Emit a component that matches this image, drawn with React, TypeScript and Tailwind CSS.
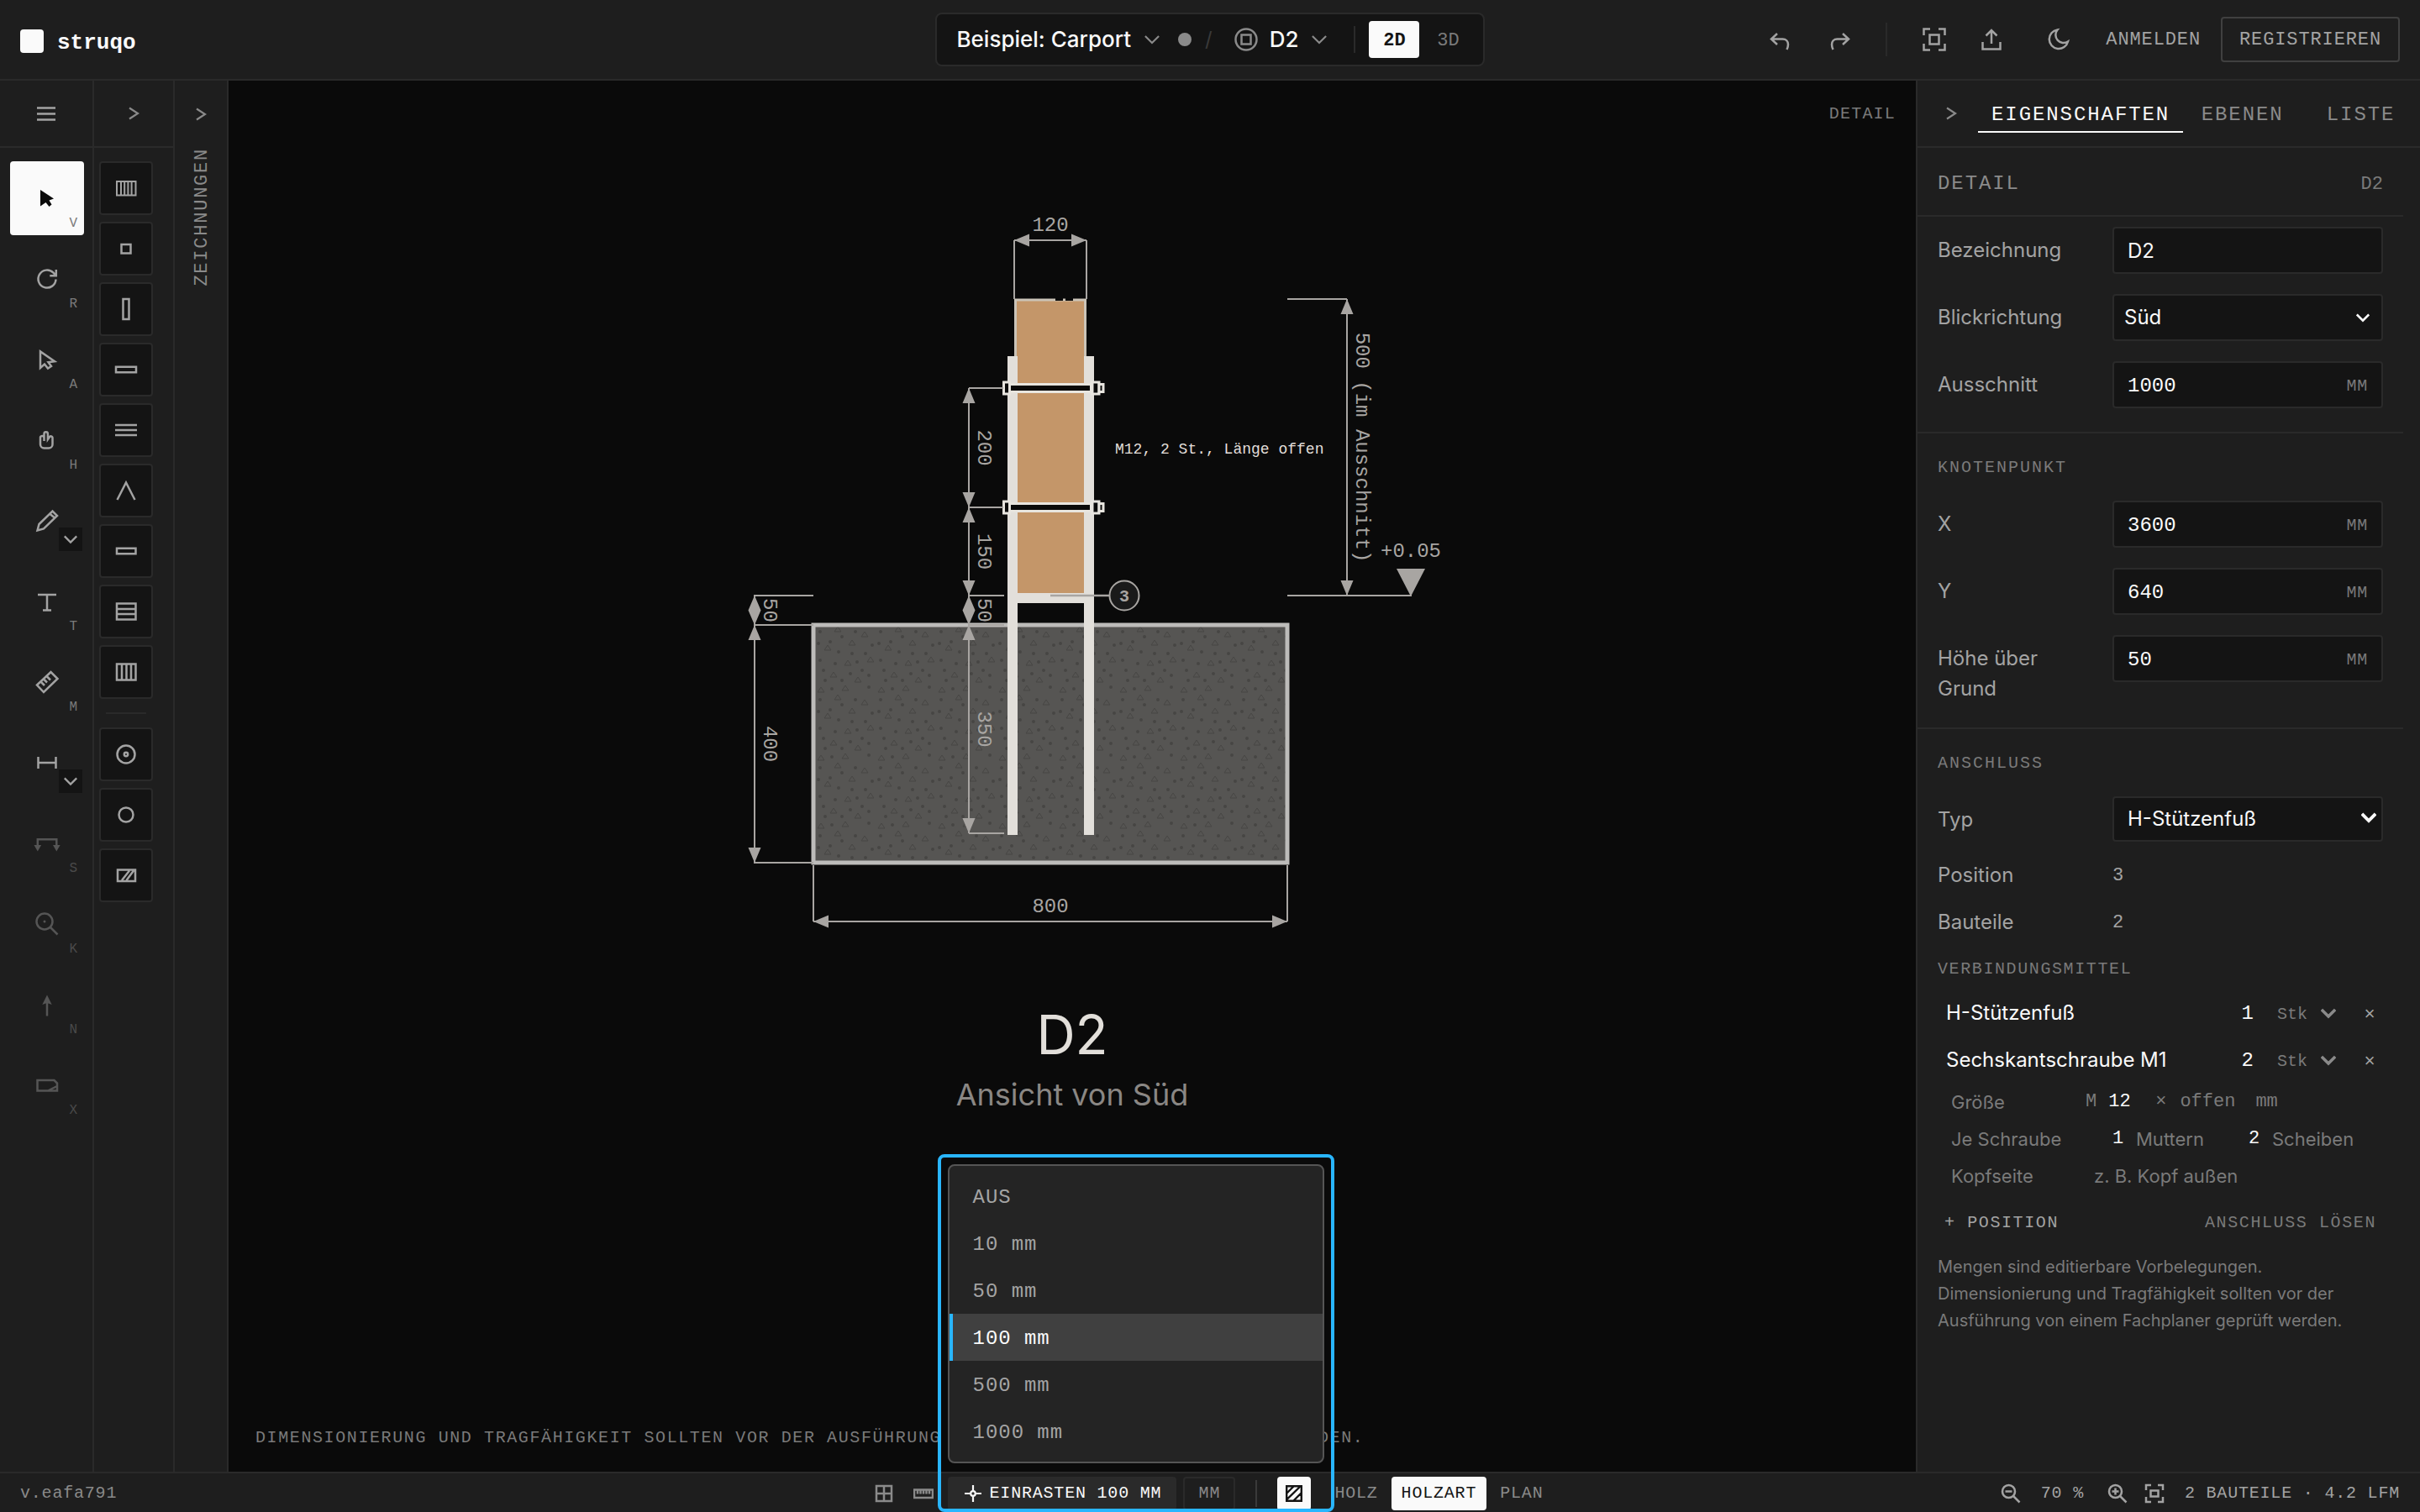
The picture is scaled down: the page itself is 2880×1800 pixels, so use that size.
import React, { useState } from "react";

const mono = "font-['Liberation_Mono',monospace]";
const label20 = "font-['Liberation_Mono',monospace] text-[20px]";

type IconProps = { children: React.ReactNode; className?: string; box?: number; stroke?: number };

function Icon({ children, className = "size-8", box = 32, stroke = 2.5 }: IconProps) {
  return (
    <svg
      viewBox={`0 0 ${box} ${box}`}
      className={className}
      fill="none"
      stroke="currentColor"
      strokeWidth={stroke}
      aria-hidden="true"
    >
      {children}
    </svg>
  );
}

const ChevronRight = () => (
  <Icon stroke={2.2}>
    <path d="M11 9.500 21 16 11 22.500" />
  </Icon>
);

function ChevronDown({ className = "size-5", stroke = 2.4 }: { className?: string; stroke?: number }) {
  return (
    <Icon box={20} className={className} stroke={stroke}>
      <path d="M1 5.500 10 14.500 19 5.500" />
    </Icon>
  );
}

/* ---------- Top bar ---------- */

function TopBar() {
  return (
    <header className="grid h-24 shrink-0 grid-cols-[1fr_auto_1fr] items-center border-b-2 border-[#2a2a2a] px-6">
      <a href="#" className="flex items-center gap-4 text-[#fafafa]">
        <span className="mt-1 size-7 rounded bg-[#fafafa]" />
        <span className={`${mono} mt-2 text-[26px] font-bold leading-8`}>struqo</span>
      </a>

      <div className="flex h-16 items-center rounded-lg border-2 border-[#2a2a2a] bg-[#141414] pl-6 pr-3 text-[#fafafa]">
        <button className="flex items-center gap-4 text-[26px] font-medium leading-8">
          Beispiel: Carport
          <ChevronDown className="size-[18px] text-[#8a8a8a]" />
        </button>
        <span className="ml-[22px] size-4 rounded-full bg-[#8a8a8a]" />
        <span className="ml-4 text-[24px] text-[#3a3a3a]">/</span>
        <button className="ml-[26px] flex items-center text-[26px] font-medium leading-8">
          <Icon className="size-7 text-[#8a8a8a]" box={28}>
            <circle cx="14" cy="14" r="12.500" />
            <rect x="8.500" y="8.500" width="11" height="11" />
          </Icon>
          <span className="ml-3.5 mr-4">D2</span>
          <ChevronDown className="size-[18px] text-[#8a8a8a]" />
        </button>
        <span className="ml-8 h-8 w-0.5 bg-[#2a2a2a]" />
        <div className={`${mono} ml-4 flex gap-1 text-[22px] leading-8`}>
          <button className="h-11 w-[60px] rounded bg-[#fafafa] pt-1 font-bold text-[#141414]">2D</button>
          <button className="h-11 w-[60px] rounded pt-1 text-[#7a7a7a]">3D</button>
        </div>
      </div>

      <div className="flex items-center justify-end text-[#a3a3a3]">
        <button aria-label="Rückgängig" className="flex size-16 items-center justify-center">
          <Icon>
            <path d="M13 9 6 15.500 13 22M6.500 15.500h13c4 0 6.500 3 6.500 6.500 0 2-.6 4-1.500 6" />
          </Icon>
        </button>
        <button aria-label="Wiederholen" className="ml-2 flex size-16 items-center justify-center">
          <Icon>
            <path d="M19 9 26 15.500 19 22M25.500 15.500h-13C8.500 15.500 6 18.500 6 22c0 2 .6 4 1.500 6" />
          </Icon>
        </button>
        <span className="ml-[22px] h-10 w-0.5 bg-[#2a2a2a]" />
        <button aria-label="Einpassen" className="ml-6 flex size-16 items-center justify-center">
          <Icon>
            <path d="M3.500 11V3.500H11M21 3.500h7.500V11M28.500 21v7.500H21M11 28.500H3.500V21" />
            <rect x="10.500" y="10.500" width="11" height="11" />
          </Icon>
        </button>
        <button aria-label="Exportieren" className="ml-1 flex size-16 items-center justify-center">
          <Icon>
            <path d="M16 21V5.500M9.500 11.500 16 5l6.500 6.500M5.500 19v8.500h21V19" />
          </Icon>
        </button>
        <button aria-label="Farbmodus" className="ml-4 flex size-16 items-center justify-center">
          <Icon>
            <path d="M14.500 4.500A11.300 11.300 0 1 0 27 18.500 9.500 9.500 0 0 1 14.500 4.500Z" />
          </Icon>
        </button>
        <button className={`${mono} ml-6 pt-0.5 text-[22px] leading-8 tracking-[0.04em]`}>ANMELDEN</button>
        <button
          className={`${mono} ml-6 h-[54px] rounded border-2 border-[#404040] px-5 pt-0.5 text-[22px] leading-8 tracking-[0.04em]`}
        >
          REGISTRIEREN
        </button>
      </div>
    </header>
  );
}

/* ---------- Tool rail ---------- */

type Tool = { name: string; hotkey?: string; menu?: boolean; active?: boolean; off?: boolean; icon: React.ReactNode };

const tools: Tool[] = [
  {
    name: "Auswahl",
    hotkey: "V",
    active: true,
    icon: <path d="M8 6 24 16.500 18.500 18.500 21.500 23.500 18.500 26 14.500 21 8 25.500Z" fill="currentColor" stroke="none" />,
  },
  {
    name: "Drehen",
    hotkey: "R",
    icon: <path d="M26.500 16.500A10.500 10.500 0 1 1 23.500 8.700L26.500 12M26.800 5v7.300h-7.500" />,
  },
  {
    name: "Direktauswahl",
    hotkey: "A",
    icon: <path d="M8 6.500V26L13 21.500 17 26.500 21 24 17.500 19.300 25 18.300Z" />,
  },
  {
    name: "Verschieben",
    hotkey: "H",
    icon: (
      <path d="M12.500 17V8.500a2.200 2.200 0 0 1 4.400 0V15l1.800-2.500a2 2 0 0 1 3.800 1V21a4.500 4.500 0 0 1-4.500 4.500h-5.500A4.500 4.500 0 0 1 8 21v-7.500a2.200 2.200 0 0 1 4.500-.5" />
    ),
  },
  {
    name: "Zeichnen",
    menu: true,
    icon: <path d="M4.500 27.500 6.500 20 22.500 4.500 28 10 12 25.500ZM19 7.500 25.500 12.800" />,
  },
  { name: "Text", hotkey: "T", icon: <path d="M5 8h22M16 8v18.500M11 26.500h10" /> },
  {
    name: "Messen",
    hotkey: "M",
    icon: <path d="M4 19.500 20.500 4 28.500 12 12 28ZM9 16l4 4M12.500 13l3.500 3.500M16 9.500l4 4" />,
  },
  { name: "Bemaßung", menu: true, icon: <path d="M5.500 9v14M26.500 9v14M5.500 16h21" /> },
  {
    name: "Schnitt",
    hotkey: "S",
    off: true,
    icon: (
      <>
        <path d="M4.800 20v-8.700h22.500V20" />
        <path d="M.5 18h8.600L4.800 25.500ZM23 18h8.600l-4.300 7.500Z" fill="currentColor" stroke="none" />
      </>
    ),
  },
  {
    name: "Detail",
    hotkey: "K",
    off: true,
    icon: (
      <>
        <circle cx="13" cy="13" r="9.500" />
        <path d="M19.500 19.500 28.500 28.500" />
        <circle cx="13" cy="13" r="1.500" fill="currentColor" stroke="none" />
      </>
    ),
  },
  {
    name: "Nordpfeil",
    hotkey: "N",
    off: true,
    icon: (
      <>
        <path d="M16 29.500V12" />
        <path d="M16 4.500 21.700 16 16 14 10.300 16Z" fill="currentColor" stroke="none" />
      </>
    ),
  },
  {
    name: "Plankopf",
    hotkey: "X",
    off: true,
    icon: <path d="M4.500 10H24.500L28 13.500V22.500H4.500ZM17 22.500 28 17" />,
  },
];

function ToolRail() {
  return (
    <nav aria-label="Werkzeuge" className="flex w-28 shrink-0 flex-col border-r-2 border-[#2a2a2a]">
      <button aria-label="Menü" className="flex h-20 items-center justify-center border-b-2 border-[#2a2a2a] text-[#a3a3a3]">
        <Icon>
          <path d="M5 9.500h22M5 16.500h22M5 23.500h22" />
        </Icon>
      </button>
      <div className="flex flex-col items-start gap-2 pl-3 pt-4">
        {tools.map((t) => (
          <div key={t.name} className="relative">
            <button
              aria-label={t.name}
              disabled={t.off}
              className={
                t.active
                  ? "flex size-[88px] items-center justify-center rounded bg-[#fafafa] text-[#0a0a0a]"
                  : t.off
                    ? "flex size-[88px] items-center justify-center rounded text-[#555555]"
                    : "flex size-[88px] items-center justify-center rounded text-[#a3a3a3]"
              }
            >
              <Icon>{t.icon}</Icon>
              {t.hotkey && (
                <span
                  className={
                    t.off
                      ? "absolute bottom-1.5 right-2 text-[16px] leading-4 text-[#4a4a4a] font-['Liberation_Mono',monospace]"
                      : "absolute bottom-1.5 right-2 text-[16px] leading-4 text-[#7a7a7a] font-['Liberation_Mono',monospace]"
                  }
                >
                  {t.hotkey}
                </span>
              )}
            </button>
            {t.menu && (
              <button
                aria-label={`${t.name}: Varianten`}
                className="absolute bottom-2 right-0.5 flex size-7 items-center justify-center bg-[#141414] text-[#a3a3a3]"
              >
                <ChevronDown className="size-4" stroke={2.8} />
              </button>
            )}
          </div>
        ))}
      </div>
    </nav>
  );
}

/* ---------- Component palette ---------- */

const partsA: { name: string; icon: React.ReactNode }[] = [
  { name: "Wand", icon: <path d="M5 8h22.500v16.500H5ZM10 8v16.500M14.200 8v16.500M18.400 8v16.500M22.600 8v16.500" strokeWidth="2" /> },
  { name: "Stütze", icon: <path d="M10.500 11h11v10.500h-11Z" /> },
  { name: "Pfosten", icon: <path d="M12.500 4h7v24h-7Z" /> },
  { name: "Träger", icon: <path d="M4 12.800h24v6.500H4Z" /> },
  { name: "Lage", icon: <path d="M3 10h26M3 16h26M3 22h26" /> },
  { name: "Sparren", icon: <path d="M5.500 27 16 6.500 26.500 27" /> },
  { name: "Balken", icon: <path d="M5 12.800h22.500v6.500H5Z" /> },
  { name: "Schalung", icon: <path d="M5 6.500h22.500v19H5ZM5 13h22.500M5 19h22.500" /> },
  { name: "Raster", icon: <path d="M5 6.500h22.500v19H5ZM11 6.500v19M16.500 6.500v19M22 6.500v19" /> },
];

const partsB: { name: string; icon: React.ReactNode }[] = [
  {
    name: "Verbinder",
    icon: (
      <>
        <circle cx="16" cy="16" r="10.500" />
        <circle cx="16" cy="16" r="2.200" />
      </>
    ),
  },
  { name: "Bohrung", icon: <circle cx="16" cy="16" r="8.500" /> },
  { name: "Platte", icon: <path d="M6 9.500h21v13.500H6ZM11 22 20 10.500M16.500 22 25 10.500" /> },
];

function PartButton({ name, icon }: { name: string; icon: React.ReactNode }) {
  return (
    <button
      aria-label={name}
      className="flex size-16 items-center justify-center rounded border-2 border-[#2a2a2a] bg-[#141414] text-[#a3a3a3]"
    >
      <Icon>{icon}</Icon>
    </button>
  );
}

function Palette() {
  return (
    <div className="flex w-24 shrink-0 flex-col border-r-2 border-[#2a2a2a]">
      <button aria-label="Palette öffnen" className="flex h-20 items-center justify-center border-b-2 border-[#2a2a2a] text-[#8a8a8a]">
        <ChevronRight />
      </button>
      <div className="flex flex-col items-start gap-2 pl-1.5 pt-4">
        {partsA.map((p) => (
          <PartButton key={p.name} {...p} />
        ))}
        <hr className="mx-2 my-2 w-12 border-t-2 border-[#2a2a2a]" />
        {partsB.map((p) => (
          <PartButton key={p.name} {...p} />
        ))}
      </div>
    </div>
  );
}

function DrawingsTab() {
  return (
    <div className="flex w-16 shrink-0 flex-col items-center border-r-2 border-[#2a2a2a] text-[#8a8a8a]">
      <button aria-label="Zeichnungen öffnen" className="flex h-20 items-center">
        <ChevronRight />
      </button>
      <span className={`${mono} ml-1 rotate-180 text-[22px] leading-8 tracking-[0.08em] [writing-mode:vertical-rl]`}>
        ZEICHNUNGEN
      </span>
    </div>
  );
}

/* ---------- Detail drawing ---------- */

const DIM = "#a8a5a2";

function HDim({ x1, x2, y, text }: { x1: number; x2: number; y: number; text: string }) {
  return (
    <g>
      <path d={`M${x1} ${y}H${x2}`} stroke={DIM} strokeWidth="2" />
      <path d={`M${x1} ${y}l18 -7.500v15ZM${x2} ${y}l-18 -7.500v15Z`} fill={DIM} />
      <text x={(x1 + x2) / 2} y={y - 11} textAnchor="middle" fill={DIM} fontSize="24">
        {text}
      </text>
    </g>
  );
}

function VDim({ x, y1, y2, text }: { x: number; y1: number; y2: number; text: string }) {
  const len = Math.min(18, (y2 - y1) / 2);
  return (
    <g>
      <path d={`M${x} ${y1}V${y2}`} stroke={DIM} strokeWidth="2" />
      <path d={`M${x} ${y1}l-7.500 ${len}h15ZM${x} ${y2}l-7.500 ${-len}h15Z`} fill={DIM} />
      <text transform={`translate(${x + 11} ${(y1 + y2) / 2}) rotate(90)`} textAnchor="middle" fill={DIM} fontSize="24">
        {text}
      </text>
    </g>
  );
}

function Bolt({ y }: { y: number }) {
  return (
    <g stroke="#e8e5df" strokeWidth="3" fill="#0a0a0a">
      <rect x="1194.500" y={y - 7} width="7" height="14" />
      <rect x="1300" y={y - 7} width="8" height="14" />
      <rect x="1308" y={y - 4.5} width="5" height="9" />
      <rect x="1201.500" y={y - 4.5} width="97" height="9" />
    </g>
  );
}

const stones = [
  [17, 30], [41, 48], [53, 68], [9, 80], [61, 14], [29, 8], [68, 44], [24, 62], [38, 78], [46, 24],
];
const grains = [
  [8, 8], [34, 14], [46, 34], [62, 34], [8, 42], [26, 46], [58, 54], [34, 66], [66, 74], [14, 66],
  [30, 32], [6, 22], [50, 8], [20, 20], [44, 58], [66, 60], [22, 76], [52, 44], [70, 24], [12, 54],
];

function Drawing() {
  return (
    <svg
      viewBox="272 96 2008 1656"
      className="size-full font-['Liberation_Mono',monospace]"
      fill="none"
      role="img"
      aria-label="Detail D2, Ansicht von Süd"
    >
      <defs>
        <pattern id="concrete" x="968" y="744" width="72" height="81" patternUnits="userSpaceOnUse">
          <rect width="72" height="81" fill="#565553" />
          {stones.map(([x, y]) => (
            <path key={`${x}-${y}`} d={`M${x - 4} ${y}l4 -6 4 6Z`} stroke="#464543" />
          ))}
          {grains.map(([x, y]) => (
            <circle key={`${x}-${y}`} cx={x} cy={y} r="2" fill="#464543" />
          ))}
        </pattern>
      </defs>

      <rect x="968" y="744" width="564" height="283" fill="url(#concrete)" stroke="#bdbcba" strokeWidth="5" />

      <rect x="1208.500" y="357" width="83" height="352" fill="#c49669" stroke="#cbc4b8" strokeWidth="3" />
      <path d="M1256 356.500h9M1268 356.500h9" stroke="#0a0a0a" strokeWidth="3" />

      <g fill="#e2dfda">
        <rect x="1199" y="424" width="12" height="570" />
        <rect x="1290" y="424" width="12" height="570" />
        <rect x="1199" y="706" width="103" height="12" />
      </g>
      <Bolt y={462} />
      <Bolt y={604} />

      <g stroke={DIM} strokeWidth="2">
        <path d="M1207 286v70M1293 286v70" />
        <path d="M897 709h71M897 744h71M897 1027h71" />
        <path d="M1153 462h41M1153 604h41M1153 709h42M1153 744h42M1153 992h42" />
        <path d="M968 1030v67M1532 1030v67" />
        <path d="M1532 356h71M1532 709h148" />
      </g>
      <HDim x1={1207} x2={1293} y={286} text="120" />
      <HDim x1={968} x2={1532} y={1097} text="800" />
      <VDim x={898} y1={709} y2={744} text="50" />
      <VDim x={898} y1={744} y2={1027} text="400" />
      <VDim x={1153} y1={462} y2={604} text="200" />
      <VDim x={1153} y1={604} y2={709} text="150" />
      <VDim x={1153} y1={709} y2={744} text="50" />
      <VDim x={1153} y1={744} y2={992} text="350" />
      <VDim x={1603} y1={356} y2={709} text="500 (im Ausschnitt)" />

      <path d="M1662 677h34l-17 33Z" fill={DIM} />
      <text x="1679" y="663" textAnchor="middle" fill={DIM} fontSize="24">
        +0.05
      </text>

      <path d="M1250 709h70" stroke={DIM} strokeWidth="2.500" />
      <circle cx="1338" cy="709" r="17.500" fill="#1a1a1a" stroke={DIM} strokeWidth="2" />
      <text x="1338" y="716" textAnchor="middle" fill={DIM} fontSize="20" fontWeight="bold">
        3
      </text>

      <text x="1327" y="540" fill="#e2dfda" fontSize="18">
        M12, 2 St., Länge offen
      </text>

      <g className="font-[Inter,sans-serif]" textAnchor="middle">
        <text x="1276" y="1255" fill="#e2dfda" fontSize="64">
          D2
        </text>
        <text x="1276" y="1316" fill="#8a8784" fontSize="36">
          Ansicht von Süd
        </text>
      </g>
    </svg>
  );
}

function Canvas() {
  return (
    <main className="relative min-w-0 flex-1 bg-[#0a0a0a]">
      <div className="absolute inset-0">
        <Drawing />
      </div>
      <span className={`${label20} absolute right-6 top-6 leading-8 tracking-[0.06em] text-[#7a7a7a]`}>DETAIL</span>
      <p className={`${label20} absolute bottom-6 left-8 leading-8 tracking-[0.08em] text-[#7a7a7a]`}>
        DIMENSIONIERUNG UND TRAGFÄHIGKEIT SOLLTEN VOR DER AUSFÜHRUNG VON EINEM FACHPLANER GEPRÜFT WERDEN.
      </p>
    </main>
  );
}

/* ---------- Properties panel ---------- */

function Row({ id, label, children }: { id: string; label: string; children: React.ReactNode }) {
  return (
    <div className="grid grid-cols-[184px_1fr] items-start gap-6 px-6 py-3">
      <label htmlFor={id} className="pt-2.5 text-[24px] leading-9 text-[#a3a3a3]">
        {label}
      </label>
      {children}
    </div>
  );
}

function NumberRow({ id, label, value }: { id: string; label: string; value: string }) {
  return (
    <Row id={id} label={label}>
      <div className="relative">
        <input
          id={id}
          defaultValue={value}
          className="h-14 w-full rounded border-2 border-[#2a2a2a] bg-[#141414] px-4 pt-0.5 text-[24px] text-[#fafafa] outline-none font-['Liberation_Mono',monospace]"
        />
        <span className={`${label20} absolute right-[18px] top-3.5 leading-8 tracking-[0.04em] text-[#7a7a7a]`}>MM</span>
      </div>
    </Row>
  );
}

function SectionTitle({ children }: { children: React.ReactNode }) {
  return <h3 className={`${label20} px-6 pb-3 pt-[26px] leading-[30px] tracking-[0.1em] text-[#7a7a7a]`}>{children}</h3>;
}

function Connector({ id, name, count }: { id: string; name: string; count: string }) {
  return (
    <div className="flex h-14 items-center pl-[34px] pr-6">
      <span className="flex-1 text-[24px] leading-8 text-[#fafafa]">{name}</span>
      <input
        aria-label={`${name}: Menge`}
        defaultValue={count}
        className="w-14 bg-transparent pt-0.5 text-right text-[24px] text-[#fafafa] outline-none font-['Liberation_Mono',monospace]"
      />
      <div className="relative ml-7 w-[72px] pt-1 text-[#7a7a7a]">
        <select
          id={id}
          aria-label={`${name}: Einheit`}
          defaultValue="Stk"
          className="w-full appearance-none bg-transparent text-[20px] outline-none font-['Liberation_Mono',monospace]"
        >
          <option>Stk</option>
        </select>
        <span className="pointer-events-none absolute right-0.5 top-2 text-[#8a8a8a]">
          <ChevronDown className="size-[18px]" stroke={4} />
        </span>
      </div>
      <button aria-label={`${name} entfernen`} className={`${mono} ml-[22px] w-8 pt-1 text-[22px] text-[#a3a3a3]`}>
        ×
      </button>
    </div>
  );
}

function Panel() {
  return (
    <aside className="flex w-[600px] shrink-0 flex-col border-l-2 border-[#2a2a2a]">
      <div className={`${mono} flex h-20 items-center border-b-2 border-[#2a2a2a] text-[24px] leading-8 tracking-[0.08em] text-[#8a8a8a]`}>
        <button aria-label="Panel schließen" className="flex h-full w-[72px] items-center justify-center pl-2">
          <ChevronRight />
        </button>
        <button className="mt-0.5 h-11 border-b-2 border-[#fafafa] px-4 pt-1 text-[#fafafa]">EIGENSCHAFTEN</button>
        <button className="mt-0.5 h-11 flex-1 border-b-2 border-transparent pt-1">EBENEN</button>
        <button className="mt-0.5 h-11 flex-1 border-b-2 border-transparent pt-1">LISTE</button>
      </div>

      <div className="flex-1 pr-5">
        <div className={`${mono} flex h-[82px] items-center justify-between border-b-2 border-[#2a2a2a] px-6 pt-1.5`}>
          <h2 className="text-[24px] tracking-[0.08em] text-[#8a8a8a]">DETAIL</h2>
          <span className="text-[22px] text-[#7a7a7a]">D2</span>
        </div>

        <section className="border-b-2 border-[#2a2a2a] pb-4">
          <Row id="name" label="Bezeichnung">
            <input
              id="name"
              defaultValue="D2"
              className="h-14 w-full rounded border-2 border-[#2a2a2a] bg-[#141414] px-4 text-[24px] text-[#fafafa] outline-none"
            />
          </Row>
          <Row id="view" label="Blickrichtung">
            <div className="relative">
              <select
                id="view"
                defaultValue="Süd"
                className="h-14 w-full appearance-none rounded border-2 border-[#2a2a2a] bg-[#141414] px-3 text-[24px] text-[#fafafa] outline-none"
              >
                <option>Süd</option>
              </select>
              <span className="pointer-events-none absolute right-4 top-5 text-[#fafafa]">
                <ChevronDown className="size-4" stroke={3.4} />
              </span>
            </div>
          </Row>
          <NumberRow id="crop" label="Ausschnitt" value="1000" />
        </section>

        <section className="border-b-2 border-[#2a2a2a] pb-4">
          <SectionTitle>KNOTENPUNKT</SectionTitle>
          <NumberRow id="x" label="X" value="3600" />
          <NumberRow id="y" label="Y" value="640" />
          <NumberRow id="height" label="Höhe über Grund" value="50" />
        </section>

        <section>
          <SectionTitle>ANSCHLUSS</SectionTitle>
          <Row id="type" label="Typ">
            <div className="relative">
              <select
                id="type"
                defaultValue="H-Stützenfuß"
                className="h-[54px] w-full appearance-none rounded border-2 border-[#2a2a2a] bg-[#141414] px-4 text-[24px] text-[#fafafa] outline-none"
              >
                <option>H-Stützenfuß</option>
              </select>
              <span className="pointer-events-none absolute right-2 top-4 text-[#fafafa]">
                <ChevronDown className="size-[18px]" stroke={4.4} />
              </span>
            </div>
          </Row>
          <dl className="grid auto-rows-[56px] grid-cols-[208px_1fr] items-center px-6 text-[24px] leading-8 text-[#a3a3a3]">
            <dt>Position</dt>
            <dd className={`${mono} pt-0.5 text-[22px]`}>3</dd>
            <dt>Bauteile</dt>
            <dd className={`${mono} pt-0.5 text-[22px]`}>2</dd>
          </dl>
          <h4 className={`${label20} px-6 pb-2 pt-3 leading-8 tracking-[0.08em] text-[#7a7a7a]`}>VERBINDUNGSMITTEL</h4>
          <Connector id="unit-1" name="H-Stützenfuß" count="1" />
          <Connector id="unit-2" name="Sechskantschraube M1" count="2" />

          <div className="pl-10 pr-6 text-[22px] leading-8 text-[#7a7a7a]">
            <div className="flex h-11 items-center">
              <label htmlFor="bolt" className="w-40">
                Größe
              </label>
              <span className={mono}>M</span>
              <input id="bolt" defaultValue="12" className={`${mono} ml-3.5 w-14 bg-transparent text-[#fafafa] outline-none`} />
              <span className={mono}>×</span>
              <input
                aria-label="Länge"
                placeholder="offen"
                className={`${mono} ml-4 w-[70px] bg-transparent outline-none placeholder:text-[#7a7a7a]`}
              />
              <span className={`${mono} ml-5`}>mm</span>
            </div>
            <div className="flex h-11 items-center">
              <span className="w-48">Je Schraube</span>
              <input id="nuts" defaultValue="1" className={`${mono} w-7 bg-transparent text-[#fafafa] outline-none`} />
              <label htmlFor="nuts" className="w-[134px]">
                Muttern
              </label>
              <input id="washers" defaultValue="2" className={`${mono} w-7 bg-transparent text-[#fafafa] outline-none`} />
              <label htmlFor="washers">Scheiben</label>
            </div>
            <div className="flex h-11 items-center">
              <label htmlFor="side" className="w-[170px]">
                Kopfseite
              </label>
              <input
                id="side"
                placeholder="z. B. Kopf außen"
                className="min-w-0 flex-1 bg-transparent outline-none placeholder:text-[#7a7a7a]"
              />
            </div>
          </div>

          <div className={`${label20} flex justify-between px-8 pb-5 pt-[18px] leading-8 tracking-[0.08em]`}>
            <button className="text-[#a3a3a3]">+ POSITION</button>
            <button className="text-[#7a7a7a]">ANSCHLUSS LÖSEN</button>
          </div>
          <p className="px-6 text-[20px] leading-8 text-[#7a7a7a]">
            Mengen sind editierbare Vorbelegungen. Dimensionierung und Tragfähigkeit sollten vor der Ausführung von einem
            Fachplaner geprüft werden.
          </p>
        </section>
      </div>
    </aside>
  );
}

/* ---------- Status bar ---------- */

const snapSteps = ["AUS", "10 mm", "50 mm", "100 mm", "500 mm", "1000 mm"];

function SnapMenu() {
  const [step, setStep] = useState("100 mm");
  return (
    <div
      role="listbox"
      aria-label="Einrasten"
      className="absolute bottom-14 left-0 z-20 flex w-[448px] flex-col rounded-lg border-2 border-[#555555] bg-[#242424] py-2"
    >
      {snapSteps.map((s) => (
        <button
          key={s}
          role="option"
          aria-selected={s === step}
          onClick={() => setStep(s)}
          className={
            s === step
              ? "h-14 border-l-4 border-[#29b6ff] bg-[#404040] pl-6 pt-1 text-left text-[24px] tracking-[0.04em] text-[#fafafa]"
              : "h-14 border-l-4 border-transparent pl-6 pt-1 text-left text-[24px] tracking-[0.04em] text-[#a3a3a3]"
          }
        >
          {s}
        </button>
      ))}
    </div>
  );
}

function ZoomGlass({ plus }: { plus?: boolean }) {
  return (
    <Icon box={24} className="size-6">
      <circle cx="9.500" cy="9.500" r="7.500" />
      <path d="M15 15 22.500 22.500M5.500 9.500h8" />
      {plus && <path d="M9.500 5.500v8" />}
    </Icon>
  );
}

function StatusBar() {
  return (
    <footer
      className={`${label20} grid h-12 shrink-0 grid-cols-[1fr_auto_1fr] items-center border-t-2 border-[#2a2a2a] px-6 pt-0.5 leading-8 tracking-[0.04em] text-[#8a8a8a]`}
    >
      <span>v.eafa791</span>

      <div className="flex items-center">
        <button aria-label="Raster" className="flex h-10 w-10 items-center justify-center">
          <Icon box={24} className="size-6">
            <path d="M3 3h18v18H3ZM12 3v18M3 12h18" />
          </Icon>
        </button>
        <button aria-label="Lineal" className="flex h-10 w-12 items-center justify-center pl-1.5">
          <Icon box={24} className="size-6">
            <path d="M1 7.500h22v9.500H1ZM5 7v5.500M8.500 7v5.500M12 7v5.500M15.500 7v5.500M19 7v5.500" />
          </Icon>
        </button>
        <div className="relative ml-2 flex items-center">
          <button className="flex h-10 items-center gap-2.5 rounded bg-[#2a2a2a] pl-5 pr-[18px] text-[#fafafa]">
            <Icon box={20} className="size-5" stroke={2.2}>
              <path d="M10 0v6.500M10 13.500V20M0 10h6.500M13.500 10H20" />
              <circle cx="10" cy="10" r="2.800" />
            </Icon>
            EINRASTEN 100 MM
          </button>
          <SnapMenu />
          <span className="pointer-events-none absolute -bottom-0.5 -left-3 z-30 h-[426px] w-[472px] rounded-lg border-4 border-[#29b6ff]" />
        </div>
        <button className="ml-2 h-10 w-[62px] rounded border-2 border-[#2a2a2a]">MM</button>
        <span className="ml-6 h-8 w-0.5 bg-[#3a3a3a]" />
        <button aria-label="Schraffur" className="ml-6 flex size-10 items-center justify-center rounded bg-[#fafafa] text-[#141414]">
          <Icon box={20} className="size-5" stroke={2.4}>
            <path d="M1.200 1.200h17.600v17.600H1.200ZM1 10 10 1M1.500 17 17.500 1.500M9 19 19 9" />
          </Icon>
        </button>
        <div className="ml-4 flex gap-1">
          <button className="h-10 px-3">HOLZ</button>
          <button className="h-10 rounded bg-[#fafafa] px-3 text-[#141414]">HOLZART</button>
          <button className="h-10 px-3">PLAN</button>
        </div>
      </div>

      <div className="flex items-center justify-end text-[#a3a3a3]">
        <button aria-label="Verkleinern">
          <ZoomGlass />
        </button>
        <span className="ml-6">70 %</span>
        <button aria-label="Vergrößern" className="ml-7">
          <ZoomGlass plus />
        </button>
        <button aria-label="Alles zeigen" className="ml-5">
          <Icon box={24} className="size-6">
            <path d="M2 8V2h6M16 2h6v6M22 16v6h-6M8 22H2v-6" />
            <rect x="7.500" y="8.500" width="9" height="7" />
          </Icon>
        </button>
        <span className="ml-6">2 BAUTEILE · 4.2 LFM</span>
      </div>
    </footer>
  );
}

export default function App() {
  return (
    <div className="flex h-screen flex-col overflow-hidden bg-[#1e1e1e] font-[Inter,sans-serif] text-[#a3a3a3]">
      <TopBar />
      <div className="flex min-h-0 flex-1">
        <ToolRail />
        <Palette />
        <DrawingsTab />
        <Canvas />
        <Panel />
      </div>
      <StatusBar />
    </div>
  );
}
